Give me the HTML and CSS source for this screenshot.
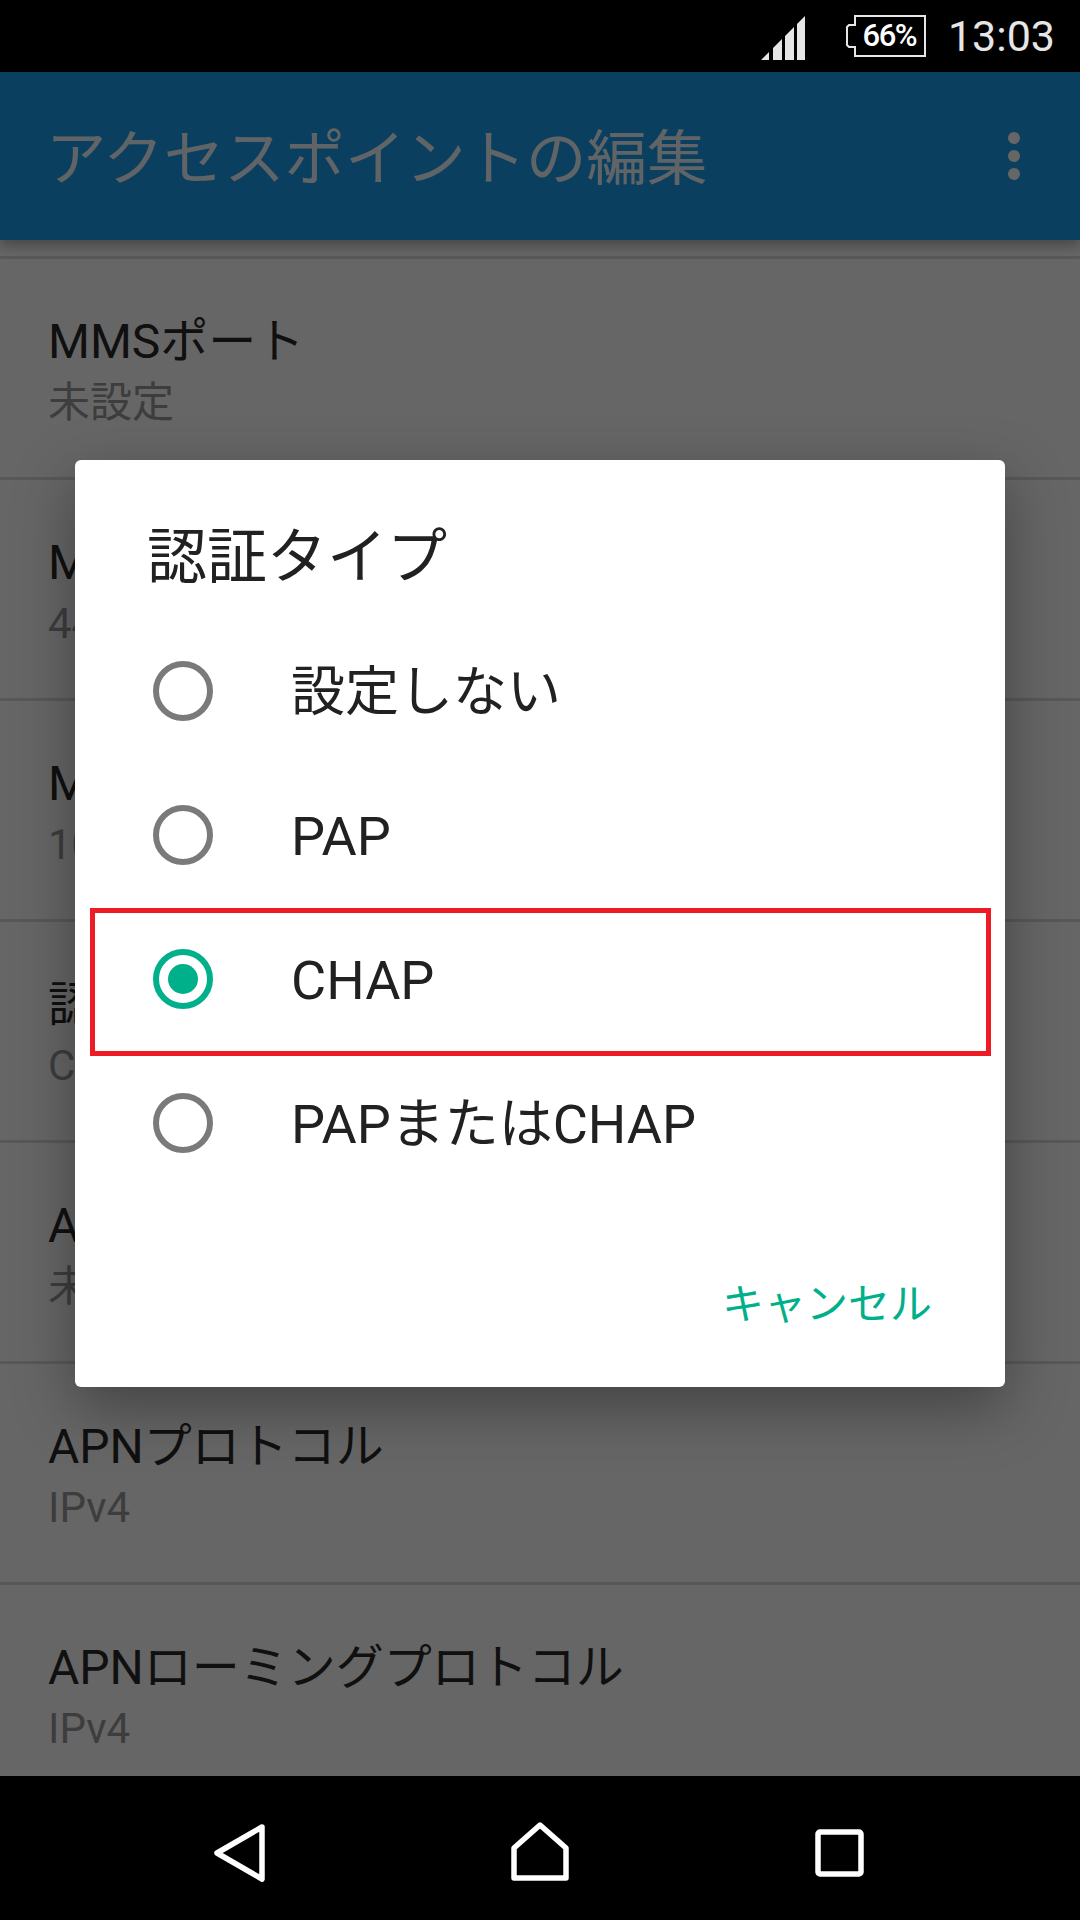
FILE: index.html
```html
<!DOCTYPE html>
<html lang="ja">
<head>
<meta charset="utf-8">
<title>アクセスポイントの編集</title>
<link rel="stylesheet" href="styles.css">
</head>
<body>
<div class="phone">
  <header class="status">
    <svg class="signal" width="44" height="44" viewBox="0 0 44 44"><path d="M0 44 8 36V44ZM12 44V32L21 23V44ZM24 44V20L33 11V44ZM36 44V8L44 0V44Z"/></svg>
    <div class="battery">
      <svg class="battery-outline" width="80" height="42" viewBox="0 0 80 42"><path d="M9 1H79V41H9V32H3L1 30V12L3 10H9Z"/></svg>
      <span class="battery-text">66%</span>
    </div>
    <span class="clock">13:03</span>
  </header>
  <main class="main">
    <div class="appbar">
      <h1 class="appbar-title">アクセスポイントの編集</h1>
      <div class="overflow"><i></i><i></i><i></i></div>
    </div>
    <div class="list">
      <div class="row"><div class="row-title">MMSポート</div><div class="row-sub">未設定</div></div>
      <div class="row"><div class="row-title">MCC</div><div class="row-sub">440</div></div>
      <div class="row"><div class="row-title">MNC</div><div class="row-sub">10</div></div>
      <div class="row"><div class="row-title">認証タイプ</div><div class="row-sub">CHAP</div></div>
      <div class="row"><div class="row-title">APNタイプ</div><div class="row-sub">未設定</div></div>
      <div class="row"><div class="row-title">APNプロトコル</div><div class="row-sub">IPv4</div></div>
      <div class="row"><div class="row-title">APNローミングプロトコル</div><div class="row-sub">IPv4</div></div>
    </div>
    <div class="scrim">
      <div class="dialog">
        <h2 class="dialog-title">認証タイプ</h2>
        <div class="option"><span class="radio"></span><span class="option-label">設定しない</span></div>
        <div class="option"><span class="radio"></span><span class="option-label">PAP</span></div>
        <div class="option"><span class="radio radio-on"></span><span class="option-label">CHAP</span><span class="highlight"></span></div>
        <div class="option"><span class="radio"></span><span class="option-label">PAPまたはCHAP</span></div>
        <div class="dialog-actions"><span class="cancel">キャンセル</span></div>
      </div>
    </div>
  </main>
  <nav class="navbar">
    <svg class="nav-icon" width="60" height="72" viewBox="0 0 60 72"><path d="M52 15 7 41 52 67Z"/></svg>
    <svg class="nav-icon" width="60" height="72" viewBox="0 0 60 72"><path d="M30 13 56 36V66H4V36Z"/></svg>
    <svg class="nav-icon" width="60" height="72" viewBox="0 0 60 72"><rect x="8" y="20" width="43" height="42" rx="2"/></svg>
  </nav>
</div>
</body>
</html>
```
FILE: styles.css
```css
* { box-sizing: border-box; }
html, body { margin: 0; padding: 0; background: #000; }
body { font-family: Roboto, "Noto Sans CJK JP", sans-serif; }
.phone { width: 1080px; height: 1920px; display: flex; flex-direction: column; overflow: hidden; background: #000; }

.status { height: 72px; flex: none; display: flex; align-items: center; justify-content: flex-end; background: #000; padding-right: 25px; }
.signal { fill: #e6e6e6; margin-right: 41px; margin-top: 4px; }
.battery { width: 80px; height: 42px; position: relative; display: flex; align-items: center; justify-content: center; padding-left: 7px; margin-right: 22px; margin-top: -1px; }
.battery-outline { position: absolute; left: 0; top: 0; fill: none; stroke: #e6e6e6; stroke-width: 2; }
.battery-text { position: relative; color: #fff; font-size: 31px; line-height: 36px; font-weight: 500; letter-spacing: -1.5px; }
.clock { color: #e6e6e6; font-size: 43px; line-height: 48px; }

.main { flex: 1; position: relative; overflow: hidden; background: #fff; }
.appbar { height: 168px; background: #1a9eed; display: flex; align-items: center; justify-content: space-between; padding: 0 60px 0 46px; box-shadow: 0 6px 12px rgba(0,0,0,.3); position: relative; }
.appbar-title { margin: 0; padding-top: 7px; color: #fff; font-size: 60.4px; font-weight: 400; line-height: 72px; opacity: .95; }
.overflow { display: flex; flex-direction: column; gap: 6px; }
.overflow i { display: block; width: 12px; height: 12px; border-radius: 50%; background: #fff; }

.list { padding-top: 16px; }
.row { height: 221px; border-top: 3px solid #dcdcdc; padding: 51px 48px 0; }
.row-title { font-size: 48px; line-height: 64px; color: #2a2a2a; }
.row-sub { font-size: 42px; line-height: 58px; color: #9a9a9a; }

.scrim { position: absolute; inset: 0; background: rgba(0,0,0,.6); display: flex; align-items: center; justify-content: center; }
.dialog { width: 930px; height: 927px; margin-top: -1px; background: #fff; border-radius: 6px; box-shadow: 0 20px 60px rgba(0,0,0,.35); display: flex; flex-direction: column; }
.dialog-title { margin: 0; padding: 62px 72px 25px; font-size: 60px; font-weight: 400; line-height: 72px; color: #212121; }
.option { height: 144px; flex: none; position: relative; display: flex; align-items: center; gap: 78px; padding-left: 78px; }
.radio { width: 60px; height: 60px; flex: none; border-radius: 50%; border: 6px solid #7a7a7a; position: relative; }
.radio-on { border-color: #00b08a; }
.radio-on::after { content: ""; position: absolute; left: 9px; top: 9px; width: 30px; height: 30px; border-radius: 50%; background: #00b08a; }
.option-label { font-size: 54px; line-height: 64px; padding-top: 3px; color: #212121; }
.highlight { position: absolute; left: 15px; top: 1px; width: 901px; height: 148px; border: 5px solid #ed1c24; }
.dialog-actions { flex: 1; display: flex; justify-content: flex-end; padding: 86px 73px 0 0; }
.cancel { font-size: 42px; line-height: 48px; color: #00b08a; }

.navbar { height: 144px; flex: none; background: #000; display: grid; grid-template-columns: repeat(3, 60px); column-gap: 240px; padding-left: 210px; align-items: center; }
.nav-icon { fill: none; stroke: #fff; stroke-width: 5.5; stroke-linejoin: round; }
```
